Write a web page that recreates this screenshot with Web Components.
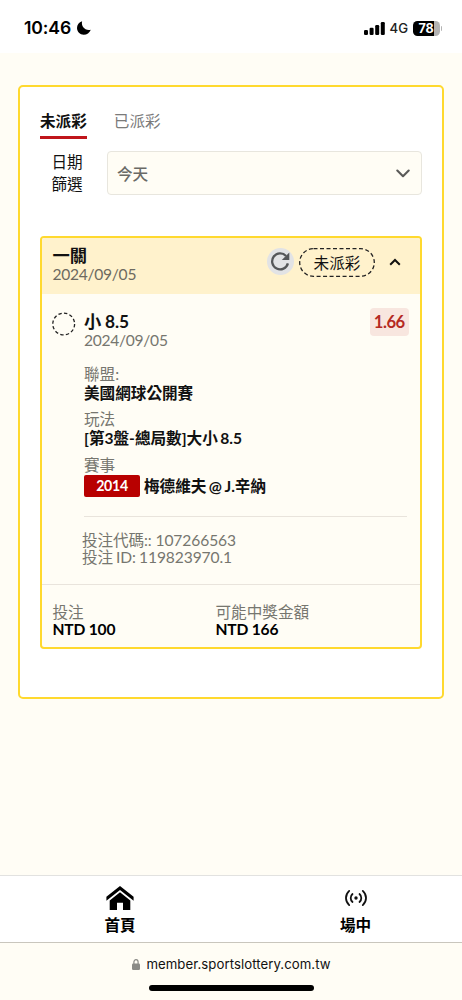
<!DOCTYPE html>
<html lang="zh-Hant">
<head>
<meta charset="utf-8">
<meta name="viewport" content="width=device-width, initial-scale=1">
<title>投注紀錄</title>
<style>
html, body { margin: 0; height: 100%; }
body { background: #fffdf5; font-family: Lato, "Noto Sans CJK TC", sans-serif; font-size: 15.6px; color: #111; overflow: hidden; }
</style>
</head>
<body>
<bet-app></bet-app>
<script>
const define = (name, html) => {
  const template = document.createElement('template');
  template.innerHTML = html;
  customElements.define(name, class extends HTMLElement {
    constructor() {
      super();
      this.attachShadow({ mode: 'open' }).append(template.content.cloneNode(true));
    }
  });
};

define('status-bar', `
<style>
:host { display: flex; align-items: center; box-sizing: border-box; height: 53px; padding: 3px 20px 0 24px; background: #fff; font-family: Inter, sans-serif; color: #000; }
.time { font-size: 17.6px; font-weight: 600; line-height: 22px; letter-spacing: -.1px; width: 53px; }
.signal { margin-left: auto; }
.net { font-size: 13.2px; font-weight: 500; line-height: 20px; width: 23px; margin-left: 5px; color: #222; }
.battery { display: flex; align-items: center; }
.level { width: 27px; height: 15px; border-radius: 4.5px; background: linear-gradient(90deg, #000 79%, #b3b3b3 79%); color: #fff; font-size: 12.6px; font-weight: 700; line-height: 15px; text-align: center; letter-spacing: -.2px; }
.tip { width: 1.5px; height: 5px; margin-left: 1px; border-radius: 0 2px 2px 0; background: #b3b3b3; }
svg { display: block; }
</style>
<span class="time">10:46</span>
<svg width="14" height="14" viewBox="0 0 14 14"><path d="M5.100.3C3.900 5.400 8 10 13.800 8.700 12.600 11.800 9.900 13.800 6.700 13.800 3 13.800 0 10.800 0 7.100 0 3.900 2 1.300 5.100.3Z"/></svg>
<svg class="signal" width="21" height="13" viewBox="0 0 21 13"><rect y="8" width="4" height="5" rx="1.2"/><rect x="5.6" y="5.800" width="4" height="7.200" rx="1.2"/><rect x="11.200" y="3" width="4" height="10" rx="1.2"/><rect x="16.800" width="4" height="13" rx="1.2"/></svg>
<span class="net">4G</span>
<span class="battery"><span class="level">78</span><span class="tip"></span></span>
`);

define('bet-tabs', `
<style>
:host { display: flex; gap: 27px; line-height: 24px; }
::slotted(*) { height: 27px; color: #7a7a7a; border-bottom: 3.5px solid transparent; }
::slotted([active]) { color: #111; font-weight: 700; border-color: #c0151b; }
</style>
<slot></slot>
`);

define('date-filter', `
<style>
:host { display: flex; height: 44.500px; }
.label { width: 54px; margin-right: 13px; padding-top: .5px; text-align: center; line-height: 22px; box-sizing: border-box; }
.select { flex: 1; display: flex; align-items: center; justify-content: space-between; padding: 0 11px 0 9px; border: 1px solid #e8e6de; border-radius: 4px; background: #fffdf5; color: #6a6a66; font-weight: 500; }
svg { display: block; margin-top: 1px; }
</style>
<div class="label">日期<br>篩選</div>
<div class="select"><slot></slot><svg width="14" height="9" viewBox="0 0 14 9" fill="none" stroke="#5a5a58" stroke-width="2.1" stroke-linecap="round" stroke-linejoin="round"><path d="M1.300 1.500 7 7.200 12.700 1.500"/></svg></div>
`);

define('bet-header', `
<style>
:host { display: flex; align-items: flex-start; height: 56.500px; box-sizing: border-box; padding: 9px 19px 0 10.5px; background: #fff2cc; }
.title { flex: 1; line-height: 18px; }
.name { font-weight: 700; font-size: 17.3px; color: #111; }
.date { color: #6d6a60; font-size: 15.6px; letter-spacing: -.28px; }
.refresh { width: 27px; height: 27px; border-radius: 50%; background: #e2e3e5; margin: 1px 5.500px 0 0; }
.pill { position: relative; width: 76px; height: 29px; margin-top: 1px; text-align: center; line-height: 30px; }
.pill svg { position: absolute; left: 0; top: 0; }
.up { margin: 11px 0 0 14px; }
svg { display: block; }
</style>
<div class="title"><div class="name"><slot name="title"></slot></div><div class="date"><slot name="date"></slot></div></div>
<div class="refresh"><svg width="27" height="27" viewBox="0 0 27 27" fill="none" stroke="#555759" stroke-width="2.300"><path d="M20.900 15.400A8 8 0 1 1 19.100 8"/><path d="M22.300 4.500V12H14.800Z" fill="#555759" stroke="none"/></svg></div>
<div class="pill"><svg width="76" height="29" fill="none" stroke="#222" stroke-width="1.300" stroke-dasharray="4 2.500"><rect x=".7" y=".7" width="74.600" height="27.600" rx="13.800"/></svg><slot name="state"></slot></div>
<svg class="up" width="12" height="8" viewBox="0 0 12 8" fill="none" stroke="#111" stroke-width="2"><path d="M1.200 6.800 6 2 10.800 6.800"/></svg>
`);

define('bet-field', `
<style>
:host { display: block; height: 45.800px; line-height: 19px; }
.label { color: #76766f; }
.value { font-weight: 700; color: #111; display: flex; align-items: center; white-space: pre; word-spacing: -1.300px; }
</style>
<div class="label"><slot name="label"></slot></div>
<div class="value"><slot></slot></div>
`);

define('match-id', `
<style>
:host { display: block; width: 56px; height: 22px; line-height: 22px; border-radius: 2px; background: #b80000; color: #fff; text-align: center; font-size: 14.2px; margin: 0 4px 0 0; white-space: normal; letter-spacing: -.3px; }
</style>
<slot></slot>
`);

define('bet-selection', `
<style>
:host { display: grid; grid-template-columns: 31.500px 1fr auto; padding: 0 11px 0 10.500px; height: 289.500px; box-sizing: border-box; }
.ring { display: block; margin: 18px 0 0 -1px; }
.main { padding-top: 17.500px; }
.name { font-weight: 700; font-size: 17.3px; line-height: 19px; white-space: pre; word-spacing: -.5px; }
.date { line-height: 18.500px; color: #76766f; letter-spacing: -.28px; }
.odds { width: 39.500px; height: 28px; margin-top: 13.500px; border-radius: 4px; background: #f8e6df; color: #b52a22; font-weight: 700; font-size: 16.6px; line-height: 29px; text-align: center; letter-spacing: -.5px; }
.details { padding-top: 15.600px; white-space: nowrap; }
.codes { grid-column: 2 / 4; margin-right: 2px; border-top: 1px solid #e9e4dc; height: 68px; box-sizing: border-box; padding-top: 15px; line-height: 17px; color: #76766f; align-self: end; letter-spacing: -.1px; }
.codes div { margin-left: -2px; }
.id { word-spacing: -.8px; }
</style>
<svg class="ring" width="24" height="24" fill="none" stroke="#222" stroke-width="1.300" stroke-dasharray="3.400 2.300"><circle cx="11.700" cy="12" r="10.900"/></svg>
<div class="main">
  <div class="name"><slot name="name"></slot></div>
  <div class="date"><slot name="date"></slot></div>
  <div class="details"><slot name="fields"></slot></div>
</div>
<div class="odds"><slot name="odds"></slot></div>
<div class="codes"><div><slot name="code"></slot></div><div class="id"><slot name="id"></slot></div></div>
`);

define('bet-totals', `
<style>
:host { display: grid; grid-template-columns: 163px 1fr; height: 63.500px; box-sizing: border-box; padding: 19.500px 10.500px 0; border-top: 1px solid #e9e4dc; line-height: 17px; }
</style>
<slot></slot>
`);
define('bet-amount', `
<style>
:host { display: block; }
.label { color: #76766f; }
.value { font-weight: 700; color: #000; letter-spacing: -.2px; }
</style>
<div class="label"><slot name="label"></slot></div><div class="value"><slot></slot></div>
`);

define('bet-card', `
<style>
:host { display: block; box-sizing: border-box; border: 2px solid #ffd92e; border-radius: 4px; overflow: hidden; background: #fffdf5; }
</style>
<slot></slot>
`);

define('bottom-nav', `
<style>
:host { display: grid; grid-template-columns: 240px 231px; height: 66px; background: #fff; border-top: 1px solid #e2e2e0; border-bottom: 1px solid #c9c6bd; font-weight: 700; color: #000; }
.item { display: flex; flex-direction: column; align-items: center; line-height: 22px; }
svg { display: block; height: 24px; margin: 10px 0 4px; }
</style>
<div class="item"><svg width="28" height="24" viewBox="0 0 28 24"><path d="M14 0 .4 10.700V14.700L14 4.100 27.600 14.700V10.700Z"/><path d="M14 6.300 3.700 14.400V24H11V16.800H17V24H24.300V14.400Z"/></svg>首頁</div>
<div class="item"><svg width="22" height="24" viewBox="0 0 22 24" fill="none" stroke="#111" stroke-width="1.800" stroke-linecap="round"><path d="M4.200 4.900C-.1 8.800-.1 15.200 4.200 19.100M17.800 4.900C22.100 8.800 22.100 15.200 17.800 19.100M7.500 8C5.100 10 5.100 14 7.500 16M14.500 8C16.900 10 16.900 14 14.500 16"/><circle cx="11" cy="12" r="1.700" fill="#111" stroke="none"/></svg>場中</div>
`);

define('browser-bar', `
<style>
:host { display: flex; flex-direction: column; align-items: center; height: 57px; font-family: Inter, sans-serif; color: #111; }
.url { display: flex; align-items: center; height: 20px; margin: 11px 0 0 1px; font-size: 13.2px; line-height: 20px; letter-spacing: .06px; }
svg { margin-right: 6px; }
.grip { width: 165px; height: 6px; border-radius: 3px; background: #000; margin-top: 11px; }
</style>
<div class="url"><svg width="8" height="11" viewBox="0 0 8 11"><rect y="4.500" width="8" height="6.500" rx="1.200" fill="#8a8a86"/><path d="M1.900 5V3A2.100 2.300 0 0 1 6.100 3V5" fill="none" stroke="#8a8a86" stroke-width="1.200"/></svg><slot></slot></div>
<div class="grip"></div>
`);

define('bet-app', `
<style>
:host { display: flex; flex-direction: column; height: 1000px; }
main { flex: 1; padding: 32px 18px 0; }
.panel { box-sizing: border-box; height: 614px; padding: 22px 20px 0; border: 2px solid #ffd92e; border-radius: 5px; background: #fff; }
date-filter { margin-top: 11.500px; }
bet-card { margin-top: 40.500px; height: 413.500px; }
</style>
<status-bar></status-bar>
<main><div class="panel">
  <bet-tabs><span active>未派彩</span><span>已派彩</span></bet-tabs>
  <date-filter>今天</date-filter>
  <bet-card>
    <bet-header><span slot="title">一關</span><span slot="date">2024/09/05</span><span slot="state">未派彩</span></bet-header>
    <bet-selection>
      <span slot="name">小 8.5</span><span slot="date">2024/09/05</span><span slot="odds">1.66</span>
      <bet-field slot="fields"><span slot="label">聯盟:</span>美國網球公開賽</bet-field>
      <bet-field slot="fields"><span slot="label">玩法</span>[第3盤-總局數]大小 8.5</bet-field>
      <bet-field slot="fields"><span slot="label">賽事</span><match-id>2014</match-id><span>梅德維夫 @ J.辛納</span></bet-field>
      <span slot="code">投注代碼:: 107266563</span><span slot="id">投注 ID: 119823970.1</span>
    </bet-selection>
    <bet-totals>
      <bet-amount><span slot="label">投注</span>NTD 100</bet-amount>
      <bet-amount><span slot="label">可能中獎金額</span>NTD 166</bet-amount>
    </bet-totals>
  </bet-card>
</div></main>
<bottom-nav></bottom-nav>
<browser-bar>member.sportslottery.com.tw</browser-bar>
`);
</script>
</body>
</html>
